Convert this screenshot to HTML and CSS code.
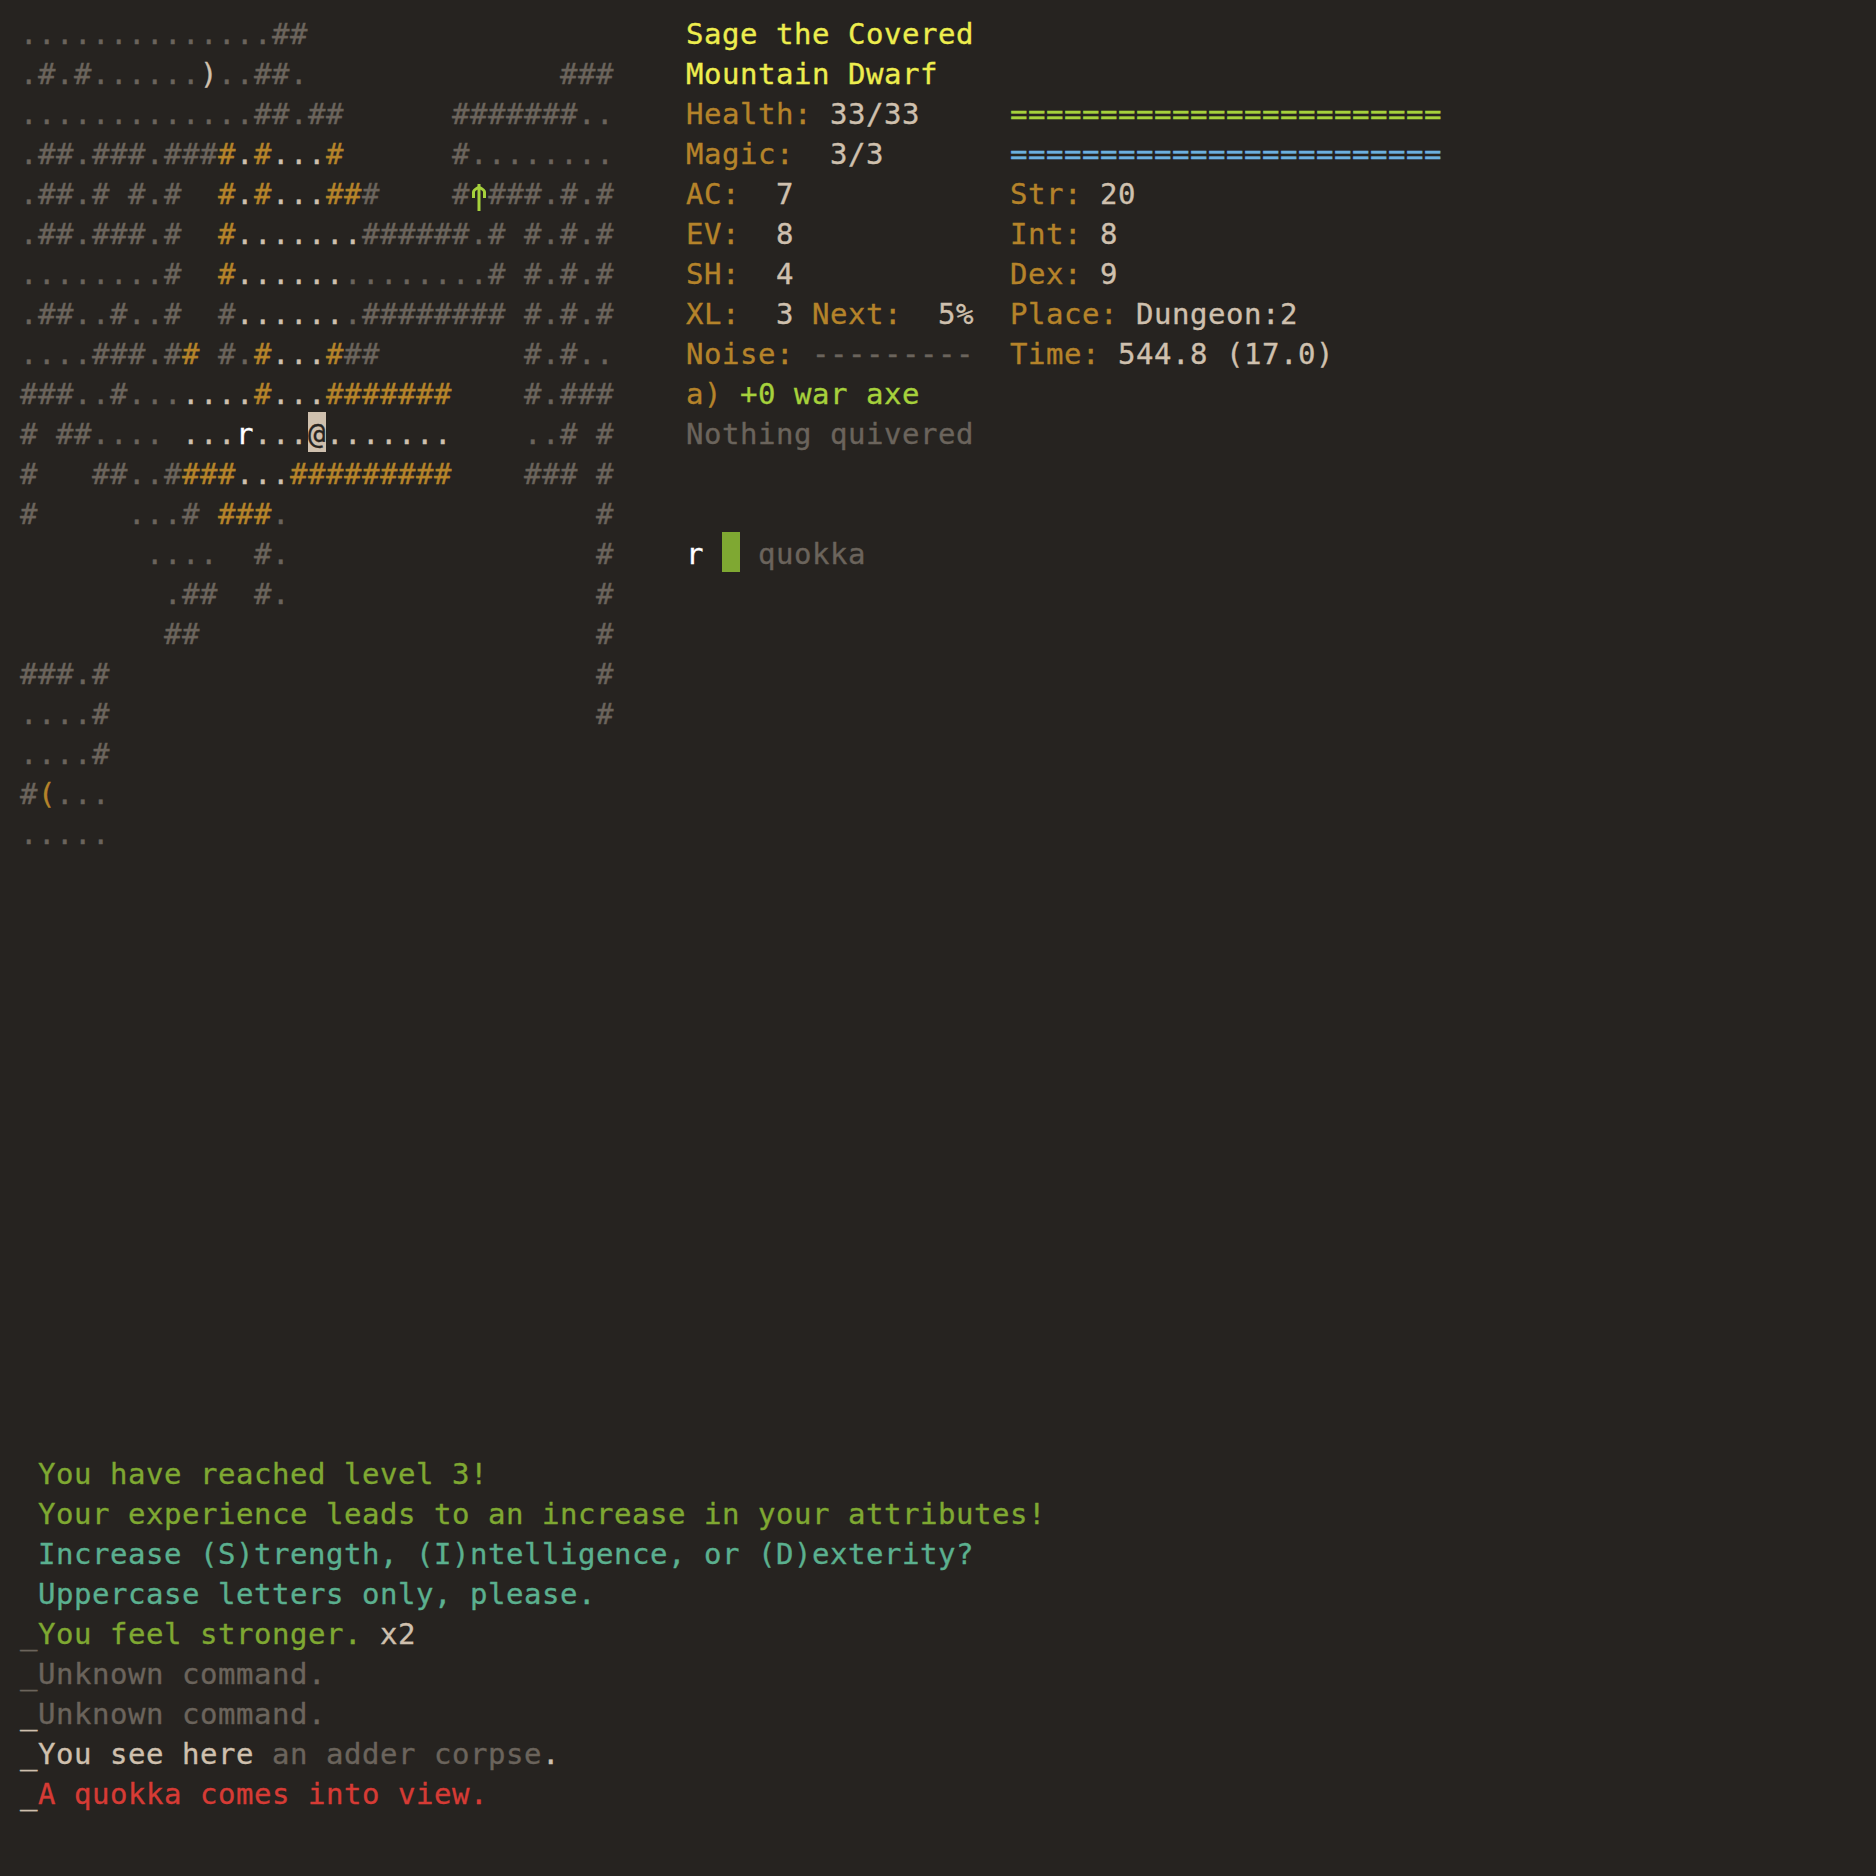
FILE: index.html
```html
<!DOCTYPE html>
<html lang="en">
<head>
<meta charset="utf-8">
<title>Dungeon Crawl</title>
<link rel="stylesheet" href="styles.css">
</head>
<body>
<main class="screen">
<section class="top">
<pre class="map">..............##
.#.#......<span class="c">)</span>..##.              ###
.............##.##      #######..
.##.###.###<span class="a">#</span><span class="c">.</span><span class="a">#</span><span class="c">...</span><span class="a">#</span>      #........
.##.# #.#  <span class="a">#</span><span class="c">.</span><span class="a">#</span><span class="c">...</span><span class="a">##</span>#    #<svg class="arrow" viewBox="0 0 18 40" role="img" aria-label="↑"><path d="M9 10V37M3.500 24V18Q3.500 16 9 13Q14.500 16 14.500 18V24"/></svg>###.#.#
.##.###.#  <span class="a">#</span><span class="c">.......</span>######.# #.#.#
........#  <span class="a">#</span><span class="c">......</span>........# #.#.#
.##..#..#  #<span class="c">......</span>.######## #.#.#
....###.#<span class="a">#</span> #.<span class="a">#</span><span class="c">...</span><span class="a">#</span>##        #.#..
###..#...<span class="c">....</span><span class="a">#</span><span class="c">...</span><span class="a">#######</span>    #.###
# ##.... <span class="c">...</span><span class="w">r</span><span class="c">...</span><span class="at">@</span><span class="c">.......</span>    ..# #
#   ##..#<span class="a">###</span><span class="c">...</span><span class="a">#########</span>    ### #
#     ...# <span class="a">###</span>.                 #
       ....  #.                 #
        .##  #.                 #
        ##                      #
###.#                           #
....#                           #
....#
#<span class="a">(</span>...
.....</pre>
<pre class="stats"><span class="y">Sage the Covered</span>
<span class="y">Mountain Dwarf</span>
<span class="a">Health:</span> <span class="c">33/33</span>
<span class="a">Magic:</span>  <span class="c">3/3</span>
<span class="a">AC:</span>  <span class="c">7</span>
<span class="a">EV:</span>  <span class="c">8</span>
<span class="a">SH:</span>  <span class="c">4</span>
<span class="a">XL:</span>  <span class="c">3</span> <span class="a">Next:</span>  <span class="c">5%</span>
<span class="a">Noise:</span> ---------
<span class="a">a)</span> <span class="l">+0 war axe</span>
Nothing quivered


<span class="w">r</span> <span class="hp"> </span> quokka</pre>
<pre class="side">


<span class="l">========================</span>
<span class="b">========================</span>
<span class="a">Str:</span> <span class="c">20</span>
<span class="a">Int:</span> <span class="c">8</span>
<span class="a">Dex:</span> <span class="c">9</span>
<span class="a">Place:</span> <span class="c">Dungeon:2</span>
<span class="a">Time:</span> <span class="c">544.8 (17.0)</span></pre>
</section>
<pre class="log"> <span class="g">You have reached level 3!</span>
 <span class="g">Your experience leads to an increase in your attributes!</span>
 <span class="t">Increase (S)trength, (I)ntelligence, or (D)exterity?</span>
 <span class="t">Uppercase letters only, please.</span>
_<span class="g">You feel stronger.</span> <span class="c">x2</span>
_Unknown command.
<span class="c">_</span>Unknown command.
<span class="c">_You see here</span> an adder corpse<span class="c">.</span>
<span class="c">_</span><span class="r">A quokka comes into view.</span></pre>
</main>
</body>
</html>
```
FILE: styles.css
```css
* { box-sizing: border-box; }
html, body { margin: 0; background: #262320; }
.screen {
  min-height: 1876px;
  padding: 14px 20px 62px;
  display: flex;
  flex-direction: column;
  justify-content: space-between;
}
pre {
  margin: 0;
  font: 400 29px/40px "DejaVu Sans Mono", monospace;
  letter-spacing: 0.542px;
  -webkit-text-stroke: 0.35px currentColor;
  color: #6b645c;
}
.top { display: flex; }
.map { width: 666px; flex: none; }
.stats { width: 324px; flex: none; }
.a { color: #b5832a; }
.c { color: #cfc0ae; }
.w { color: #ffffff; }
.l { color: #a6d13c; }
.b { color: #6cb0e0; }
.y { color: #eded4e; }
.g { color: #7fa832; }
.t { color: #5bb08f; }
.r { color: #d63b35; }
.at, .hp { padding: 5px 0 1px; }
.at { background: #cfc0ae; color: #262320; }
.hp { background: #7fa832; }
.arrow { width: 18px; height: 40px; vertical-align: top; }
.arrow path { fill: none; stroke: #a6d13c; stroke-width: 3; }
```
